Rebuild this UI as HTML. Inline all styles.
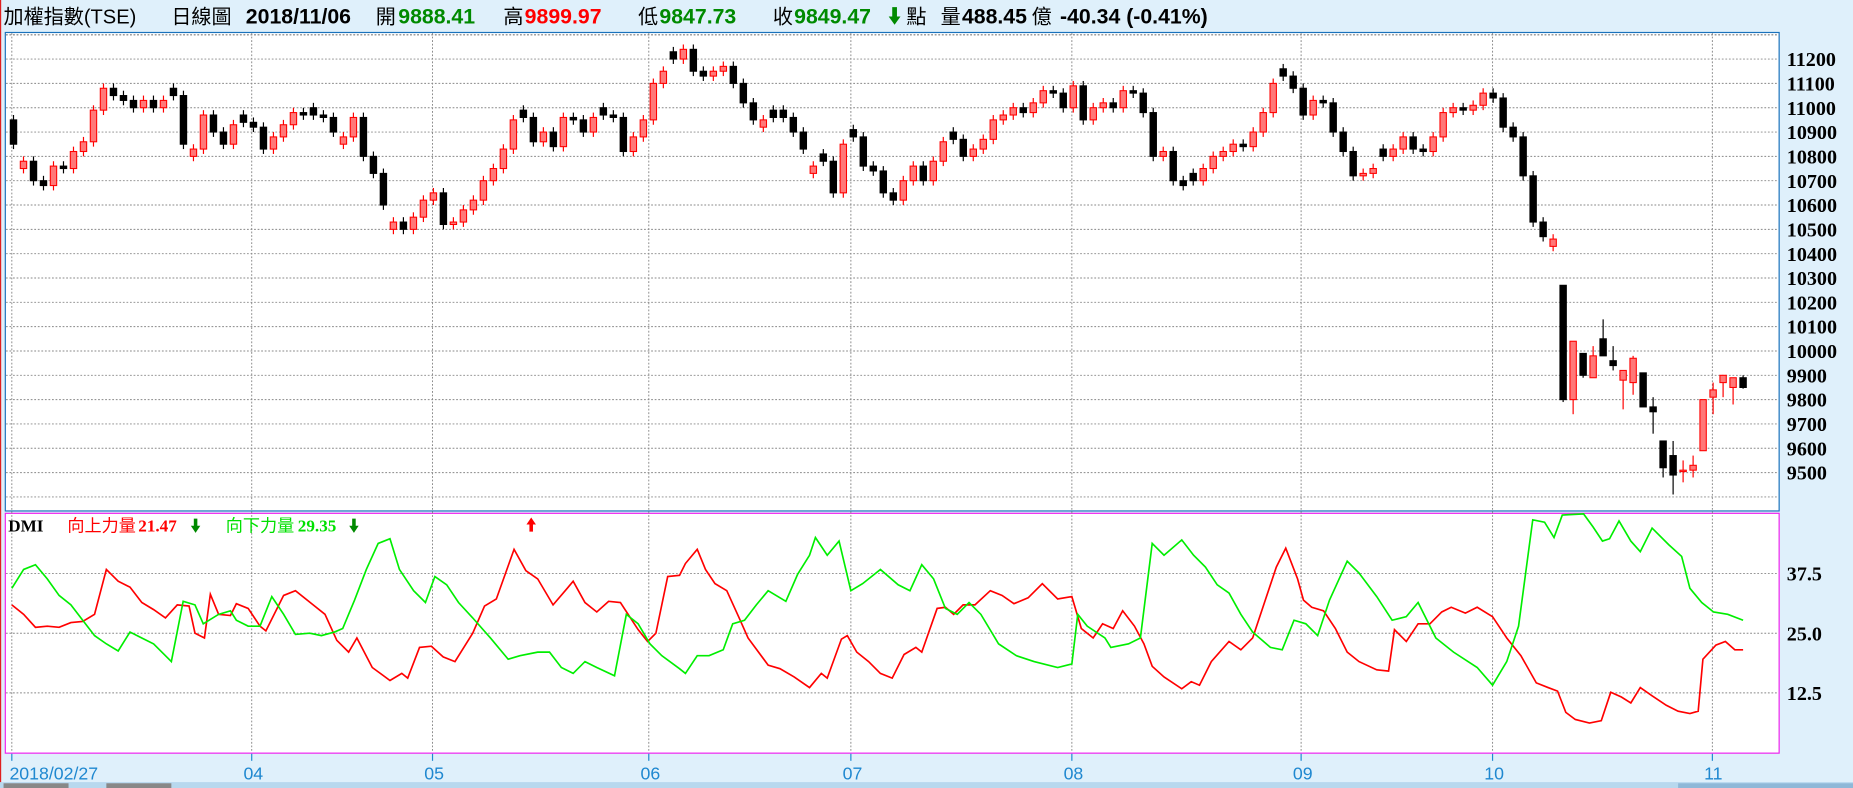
<!DOCTYPE html>
<html><head><meta charset="utf-8">
<style>
html,body{margin:0;padding:0;background:#dff0fb;overflow:hidden}
svg{display:block}
.h{font-family:"Liberation Sans","Noto Sans CJK TC",sans-serif;font-size:17px}
.b{font-weight:bold}
.ax{font-family:"Liberation Serif",serif;font-weight:bold;font-size:17px;fill:#000}
.xl{font-family:"Liberation Sans",sans-serif;font-size:15px;fill:#1f88d0}
</style></head><body>
<svg id="s" width="1853" height="788" viewBox="0 0 1568 667" preserveAspectRatio="none" xmlns="http://www.w3.org/2000/svg">
<rect x="0" y="0" width="1568" height="667" fill="#dff0fb"/>
<line x1="0.5" y1="0" x2="0.5" y2="667" stroke="#e02020" stroke-width="1"/>
<g class="h">
<text x="3" y="20">加權指數(TSE)</text>
<text x="145" y="20">日線圖</text>
<text x="208" y="20" class="b" font-size="18">2018/11/06</text>
<text x="318" y="20">開</text><text x="337" y="20" class="b" fill="#008a00" font-size="18">9888.41</text>
<text x="426" y="20">高</text><text x="444" y="20" class="b" fill="#ff0000" font-size="18">9899.97</text>
<text x="540" y="20">低</text><text x="558" y="20" class="b" fill="#008a00" font-size="18">9847.73</text>
<text x="654" y="20">收</text><text x="672" y="20" class="b" fill="#008a00" font-size="18">9849.47</text>
<polygon points="755,6 759,6 759,14 762,14 757,21 752,14 755,14" fill="#008a00"/>
<text x="767" y="20">點</text>
<text x="796" y="20">量</text><text x="814" y="20" class="b" font-size="18">488.45</text>
<text x="873" y="20">億</text>
<text x="897" y="20" class="b" font-size="18">-40.34 (-0.41%)</text>
</g>
<rect x="4.5" y="27.5" width="1501" height="405" fill="#fff" stroke="#1a72bc"/>
<rect x="4.5" y="434.5" width="1501" height="203" fill="#fff" stroke="#ee22ee"/>
<g id="grid" stroke="#888" stroke-width="0.8" stroke-dasharray="1.5,1.5"></g>
<g id="axes"></g>
<g id="cand"></g>
<polyline id="red" fill="none" stroke="#ff0000" stroke-width="1.4"/>
<polyline id="grn" fill="none" stroke="#00ee00" stroke-width="1.4"/>
<g font-size="14.5">
<text x="7" y="450" fill="#000" font-family="Liberation Serif,serif" font-weight="bold">DMI</text>
<text x="57" y="450" fill="#ff0000" font-family="Noto Sans CJK TC,sans-serif">向上力量</text>
<text x="117" y="450" fill="#ff0000" font-family="Liberation Serif,serif" font-weight="bold">21.47</text>
<text x="191" y="450" fill="#00e000" font-family="Noto Sans CJK TC,sans-serif">向下力量</text>
<text x="252" y="450" fill="#00e000" font-family="Liberation Serif,serif" font-weight="bold">29.35</text>
</g>
<polygon points="164,439 167,439 167,445 169.5,445 165.5,451 161.5,445 164,445" fill="#008a00"/>
<polygon points="298,439 301,439 301,445 303.5,445 299.5,451 295.5,445 298,445" fill="#008a00"/>
<polygon points="448,450 451,450 451,444 453.5,444 449.5,438 445.5,444 448,444" fill="#ff0000"/>
<rect x="0" y="662" width="1568" height="5" fill="#b8d8ee"/>
<rect x="3" y="663" width="55" height="4" fill="#888"/><rect x="90" y="663" width="55" height="4" fill="#888"/>
<rect x="1420" y="663" width="148" height="4" fill="#8fb8d8"/>
</svg>
<script>
var NS="http://www.w3.org/2000/svg";
function el(p,t,a){var e=document.createElementNS(NS,t);for(var k in a)e.setAttribute(k,a[k]);p.appendChild(e);return e;}
var g=document.getElementById('grid'),ax=document.getElementById('axes');
function py(p){return 50+(11200-p)*0.2059;}
function dy(v){return 536-(v-25)*4.04;}
for(var p=9400;p<=11300;p+=100){var y=py(p);if(y<28||y>432)continue;el(g,'line',{x1:5,x2:1505,y1:y,y2:y});
 if(p>=9500&&p<=11200){var t=el(ax,'text',{x:1512,y:y+6,'class':'ax'});t.textContent=p;}}
el(g,'line',{x1:5,x2:1505,y1:29.5,y2:29.5});
[12.5,25,37.5].forEach(function(v){var y=dy(v);el(g,'line',{x1:5,x2:1505,y1:y,y2:y});var t=el(ax,'text',{x:1512,y:y+6,'class':'ax'});t.textContent=v.toFixed(1);});
var vx=[10,213,366,549,720,907,1101,1263,1449],lab=['2018/02/27','04','05','06','07','08','09','10','11'];
vx.forEach(function(x,i){el(g,'line',{x1:x,x2:x,y1:28,y2:637});
 el(ax,'line',{x1:x,x2:x,y1:638,y2:644,stroke:'#1f88d0','stroke-width':1});
 var t=el(ax,'text',{x:i==0?8:x-7,y:660,'class':'xl'});t.textContent=lab[i];});
var d="10850b 10780r 10700b 10680b 10760r 10750b 10820r 10860r 10990r 11080r 11050b 11030b 11000b 11030r 11000b 11030r 11050b 10850b 10830r 10970r 10900b 10850b 10930r 10940b 10920b 10830b 10880r 10930r 10980r 10970b 10970b 10960b 10900b 10880r 10960r 10800b 10730b 10600b 10530r 10500b 10550r 10620r 10650r 10520b 10530r 10580r 10620r 10700r 10750r 10830r 10950r 10960b 10860b 10900r 10840b 10960r 10950b 10900b 10960r 10970b 10960b 10820b 10880r 10950r 11100r 11150r 11200b 11240r 11150b 11130b 11150r 11170r 11100b 11020b 10950b 10950r 10960b 10960b 10900b 10830b 10760r 10780b 10650b 10850r 10880b 10760b 10740b 10650b 10620b 10700r 10760r 10700b 10780r 10860r 10870b 10800b 10830r 10870r 10950r 10970r 11000r 10980b 11020r 11070r 11060b 11000b 11090r 10950b 11000r 11020r 11000b 11070r 11060b 10980b 10800b 10820r 10700b 10680b 10700b 10750r 10800r 10820r 10850r 10840b 10900r 10980r 11100r 11130b 11080b 10970b 11030r 11020b 10900b 10820b 10720b 10730r 10750r 10800b 10830r 10880r 10830b 10820b 10880r 10980r 11000r 10990b 11010r 11060r 11040b 10920b 10880b 10720b 10530b 10470b 10460r".split(' ');
var C=[];var prev=10950;
d.forEach(function(s){var c=+s.slice(0,-1),f=s.slice(-1),o=prev;if(f=='r'&&o>=c)o=c-30;if(f=='b'&&o<=c)o=c+30;C.push([o,c,Math.max(o,c)+20,Math.min(o,c)-20]);prev=c;});
C=C.concat([[10270,9800,10270,9790],[9800,10040,10040,9740],[9990,9900,9990,9890],[9890,9980,10020,9890],[10050,9980,10130,9980],[9960,9940,10020,9920],[9880,9920,9920,9760],[9870,9970,9980,9820],[9910,9770,9910,9770],[9770,9750,9810,9660],[9630,9520,9630,9480],[9570,9490,9630,9410],[9505,9510,9550,9460],[9510,9530,9570,9480],[9590,9800,9800,9590],[9810,9840,9870,9740],[9870,9900,9900,9810],[9850,9890,9890,9780],[9890,9850,9900,9845]]);
var cg=document.getElementById('cand'),N=C.length;
C.forEach(function(k,i){var x=1475-(N-1-i)*8.46;var o=k[0],c=k[1],red=c>=o;var col=red?'#ff0000':'#000';
 el(cg,'line',{x1:x,x2:x,y1:py(k[2]),y2:py(k[3]),stroke:col,'stroke-width':1});
 var t=py(Math.max(o,c)),b=py(Math.min(o,c));if(b-t<1.2)b=t+1.2;
 el(cg,'rect',{x:x-2.7,y:t,width:5.4,height:b-t,fill:red?'#ff7878':'#000',stroke:col,'stroke-width':0.9});});
var R=[[10,512],[20,520],[30,531],[40,530],[50,531],[60,527],[70,526],[80,520],[90,482],[100,492],[110,497],[120,510],[130,516],[140,523],[150,512],[160,513],[165,536],[173,540],[178,503],[185,520],[195,521],[200,511],[210,515],[220,530],[225,534],[240,504],[250,500],[265,512],[275,520],[285,542],[295,552],[302,540],[315,565],[330,576],[340,570],[345,574],[355,548],[365,547],[375,556],[385,560],[400,536],[410,513],[420,507],[435,465],[445,483],[455,490],[468,512],[480,498],[485,492],[495,510],[505,518],[515,509],[525,510],[540,533],[548,543],[555,536],[565,488],[575,487],[580,477],[590,465],[597,482],[605,494],[615,500],[625,522],[633,540],[650,563],[660,566],[672,573],[685,582],[695,570],[700,574],[712,541],[717,538],[725,552],[735,560],[745,570],[755,574],[765,554],[775,548],[780,552],[793,515],[800,514],[807,520],[815,512],[825,512],[838,500],[848,504],[858,511],[870,506],[882,494],[895,507],[907,505],[915,532],[925,540],[933,528],[942,532],[950,517],[960,530],[968,545],[975,564],[985,573],[1000,583],[1008,577],[1015,580],[1025,560],[1040,543],[1050,550],[1060,540],[1070,510],[1080,480],[1088,464],[1098,490],[1103,508],[1110,514],[1120,517],[1130,532],[1140,552],[1150,560],[1165,567],[1175,568],[1180,533],[1185,538],[1190,543],[1200,528],[1210,528],[1220,518],[1228,514],[1240,519],[1250,514],[1263,522],[1275,540],[1287,555],[1300,578],[1310,582],[1318,585],[1325,603],[1333,609],[1345,612],[1355,610],[1363,586],[1372,590],[1380,595],[1388,582],[1398,589],[1410,597],[1420,602],[1430,604],[1437,602],[1441,558],[1452,546],[1460,543],[1468,550],[1475,550]];
var G=[[10,498],[20,482],[30,478],[40,490],[50,504],[60,512],[70,525],[80,538],[90,545],[100,551],[110,535],[120,540],[130,545],[145,560],[155,509],[165,512],[172,528],[185,520],[195,517],[200,525],[210,530],[220,530],[230,505],[240,520],[250,537],[262,536],[272,538],[283,535],[290,532],[295,520],[300,508],[310,482],[320,460],[330,456],[338,482],[350,500],[360,510],[368,488],[378,495],[388,510],[400,523],[415,540],[430,558],[440,555],[455,552],[465,552],[475,565],[485,570],[495,560],[505,565],[520,572],[530,520],[540,528],[550,545],[560,555],[575,566],[580,570],[590,555],[600,555],[612,550],[620,528],[630,525],[640,512],[650,500],[665,509],[675,486],[685,470],[690,455],[700,470],[710,458],[720,500],[730,494],[745,482],[760,495],[770,500],[780,478],[790,490],[800,515],[810,520],[820,510],[830,520],[845,545],[860,555],[875,560],[895,565],[907,562],[912,520],[920,530],[935,540],[940,548],[955,545],[965,540],[975,460],[985,470],[1000,457],[1010,470],[1020,480],[1030,495],[1040,502],[1050,520],[1060,535],[1075,548],[1085,550],[1095,525],[1105,528],[1115,538],[1125,508],[1140,475],[1150,485],[1165,505],[1178,525],[1190,522],[1200,510],[1215,540],[1230,552],[1250,565],[1263,580],[1275,560],[1285,530],[1297,440],[1307,442],[1315,455],[1322,436],[1340,435],[1348,446],[1356,458],[1362,456],[1370,441],[1380,458],[1388,467],[1398,447],[1412,461],[1423,471],[1430,498],[1440,510],[1450,518],[1462,520],[1475,525]];
document.getElementById('red').setAttribute('points',R.map(function(p){return p.join(',')}).join(' '));
document.getElementById('grn').setAttribute('points',G.map(function(p){return p.join(',')}).join(' '));
</script>
</body></html>
